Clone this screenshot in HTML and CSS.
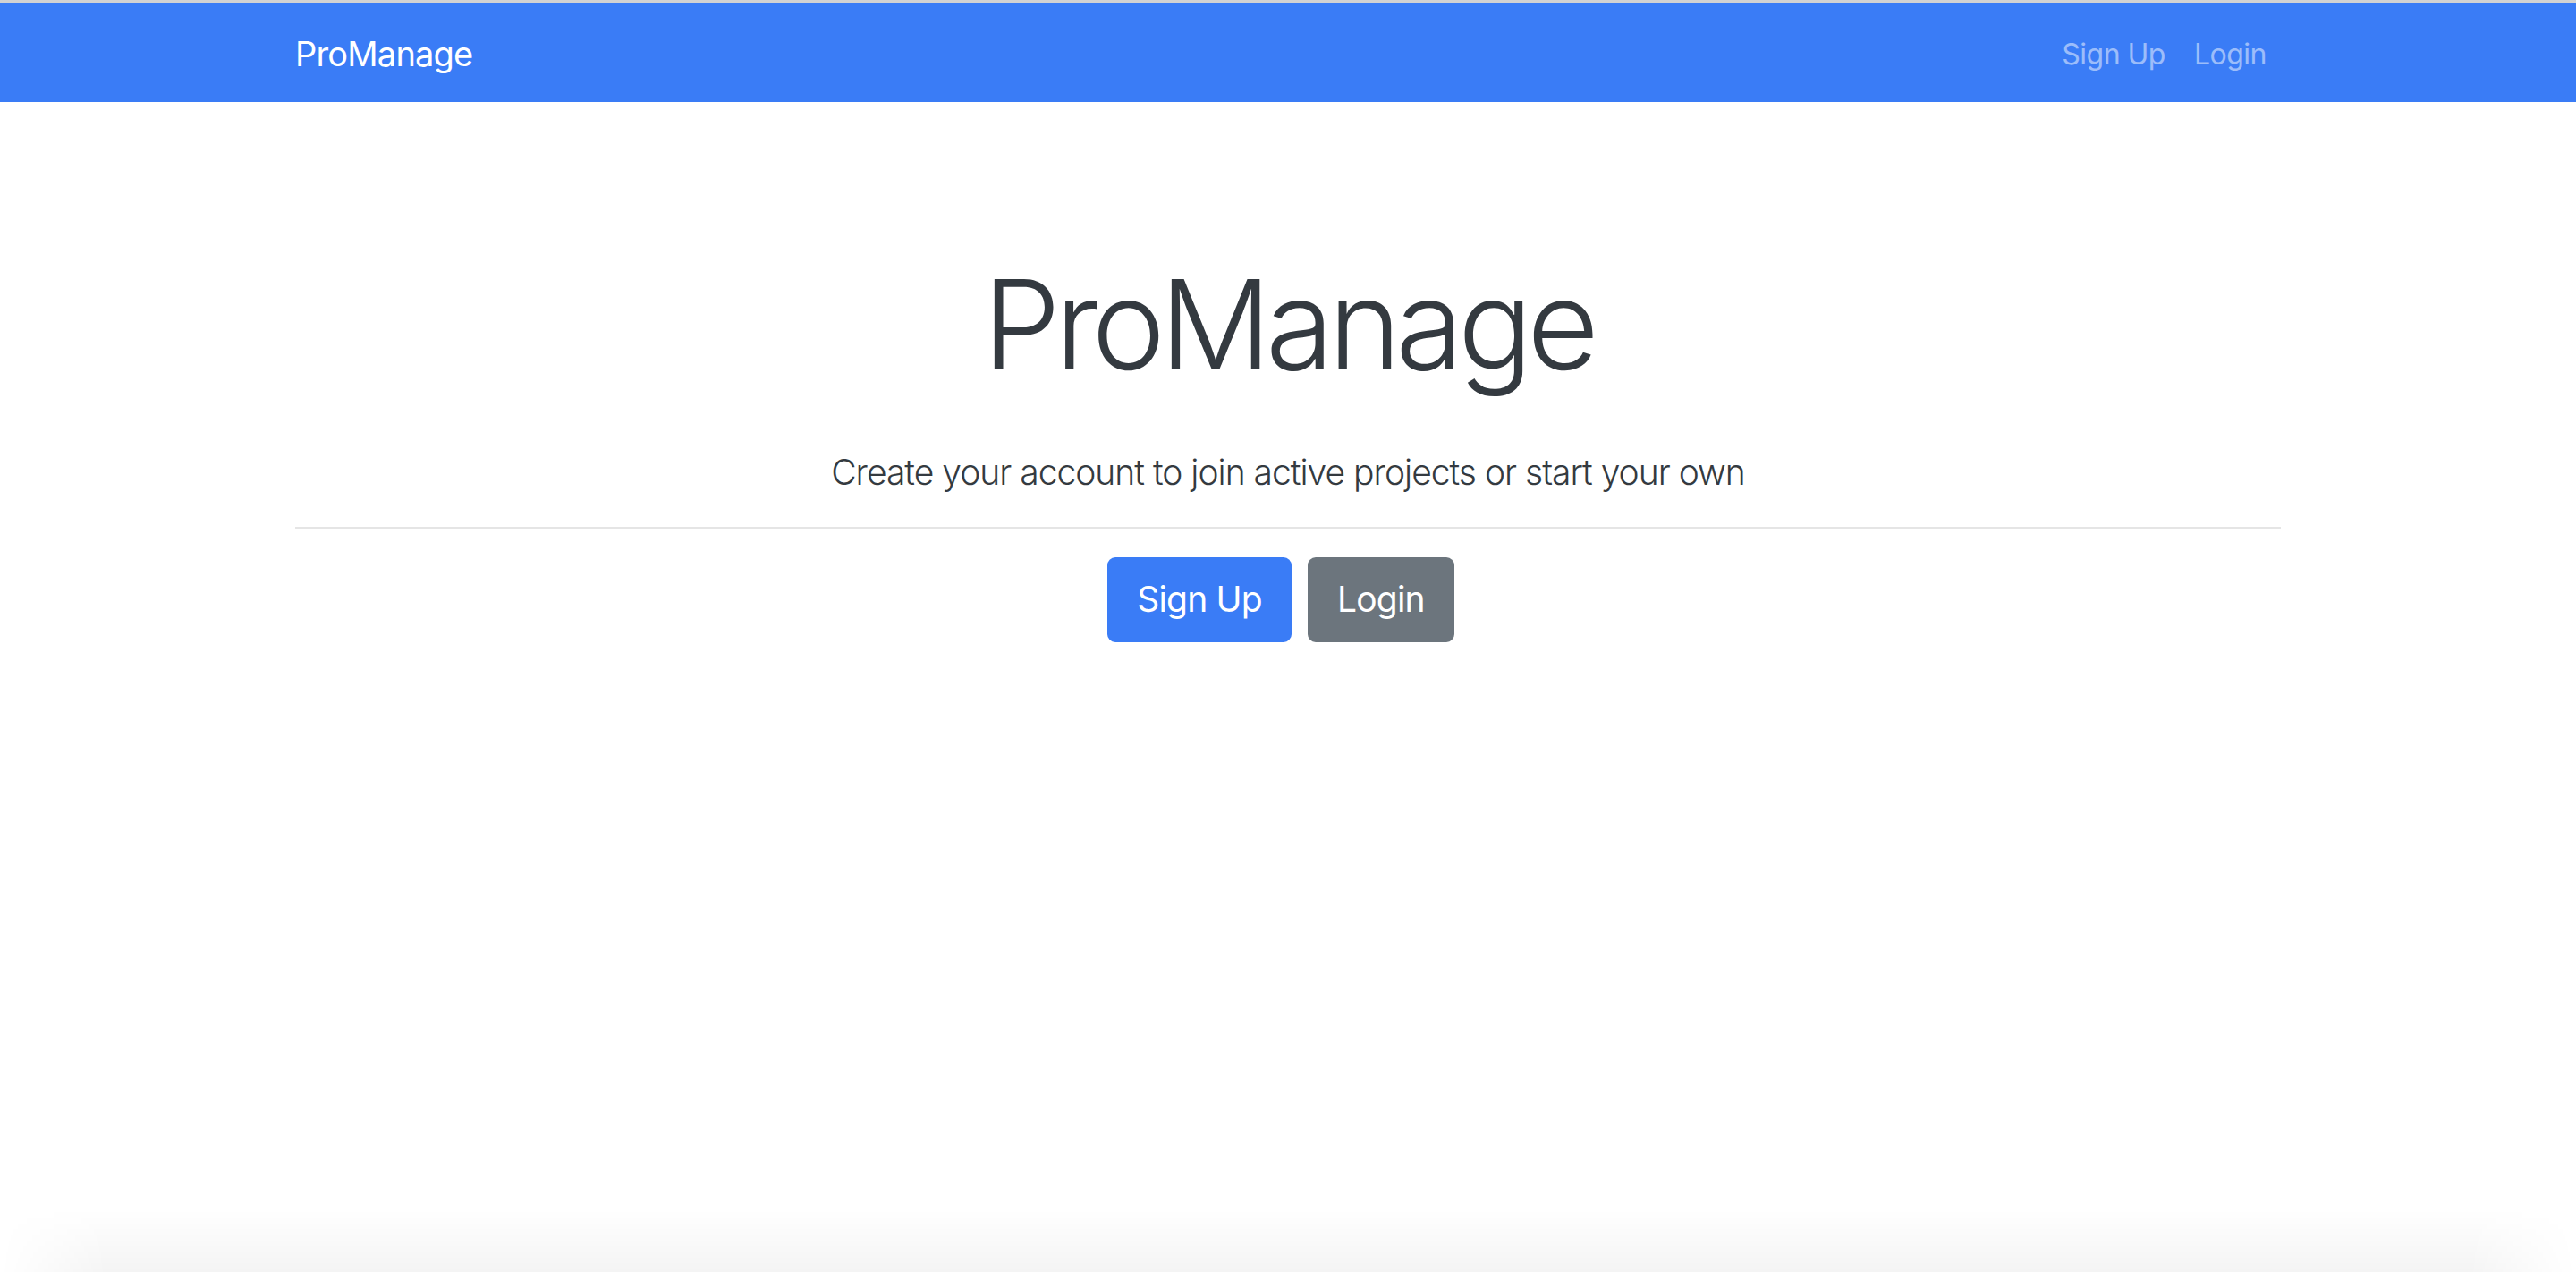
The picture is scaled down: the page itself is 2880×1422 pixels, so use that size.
FILE: index.html
```html
<!DOCTYPE html>
<html lang="en">
<head>
<meta charset="utf-8">
<title>ProManage</title>
<link rel="stylesheet" href="styles.css">
</head>
<body>
<nav class="navbar">
  <div class="container nav-inner">
    <a class="brand" href="#">ProManage</a>
    <div class="nav-links">
      <a class="nav-link" href="#">Sign Up</a>
      <a class="nav-link" href="#">Login</a>
    </div>
  </div>
</nav>
<main class="container hero">
  <h1 class="display">ProManage</h1>
  <p class="lead">Create your account to join active projects or start your own</p>
  <hr class="divider">
  <div class="actions">
    <a class="btn btn-primary" href="#">Sign Up</a>
    <a class="btn btn-secondary" href="#">Login</a>
  </div>
</main>
<div class="window-shadow"></div>
</body>
</html>
```
FILE: styles.css
```css
html, body {
  margin: 0;
  padding: 0;
  background: #ffffff;
  font-family: Inter, "Noto Sans", "Liberation Sans", sans-serif;
  color: #343a40;
}

.container {
  width: 2220px;
  margin: 0 auto;
}

.navbar {
  background: #3a7cf6;
  border-top: 3px solid #d2d2d2;
  height: 111px;
  box-sizing: content-box;
}

.nav-inner {
  height: 100%;
  display: flex;
  align-items: center;
  justify-content: space-between;
}

.brand {
  color: #ffffff;
  font-size: 38px;
  text-decoration: none;
  letter-spacing: -0.8px;
  padding-top: 3px;
}

.nav-links {
  display: flex;
  padding-top: 3px;
}

.nav-link {
  color: rgba(255, 255, 255, 0.5);
  font-size: 32px;
  padding: 0 16px;
  text-decoration: none;
  letter-spacing: -0.5px;
}

.hero {
  text-align: center;
  padding-top: 166px;
}

.display {
  font-size: 139px;
  font-weight: 300;
  line-height: 1.2;
  margin: 0 0 52px;
  letter-spacing: -6.5px;
}

.lead {
  font-size: 39px;
  font-weight: 300;
  line-height: 1.5;
  margin: 0 0 32px;
  letter-spacing: -1px;
}

.divider {
  border: 0;
  border-top: 2px solid #e5e5e5;
  margin: 0 0 32px;
}

.actions {
  display: flex;
  justify-content: center;
  gap: 18px;
  padding-right: 16px;
}

.btn {
  display: inline-block;
  font-size: 39px;
  line-height: 1.5;
  padding: 18px 33px;
  border-radius: 9px;
  color: #ffffff;
  text-decoration: none;
  letter-spacing: -0.8px;
}

.btn-primary {
  background: #3a7cf6;
}

.btn-secondary {
  background: #6c757d;
}

.window-shadow {
  position: fixed;
  left: 0;
  right: 0;
  bottom: 0;
  height: 70px;
  background: linear-gradient(to bottom, rgba(0,0,0,0), rgba(0,0,0,0.045));
  -webkit-mask-image: linear-gradient(to right, transparent 0, #000 120px, #000 calc(100% - 120px), transparent 100%);
  mask-image: linear-gradient(to right, transparent 0, #000 120px, #000 calc(100% - 120px), transparent 100%);
  pointer-events: none;
}
```
